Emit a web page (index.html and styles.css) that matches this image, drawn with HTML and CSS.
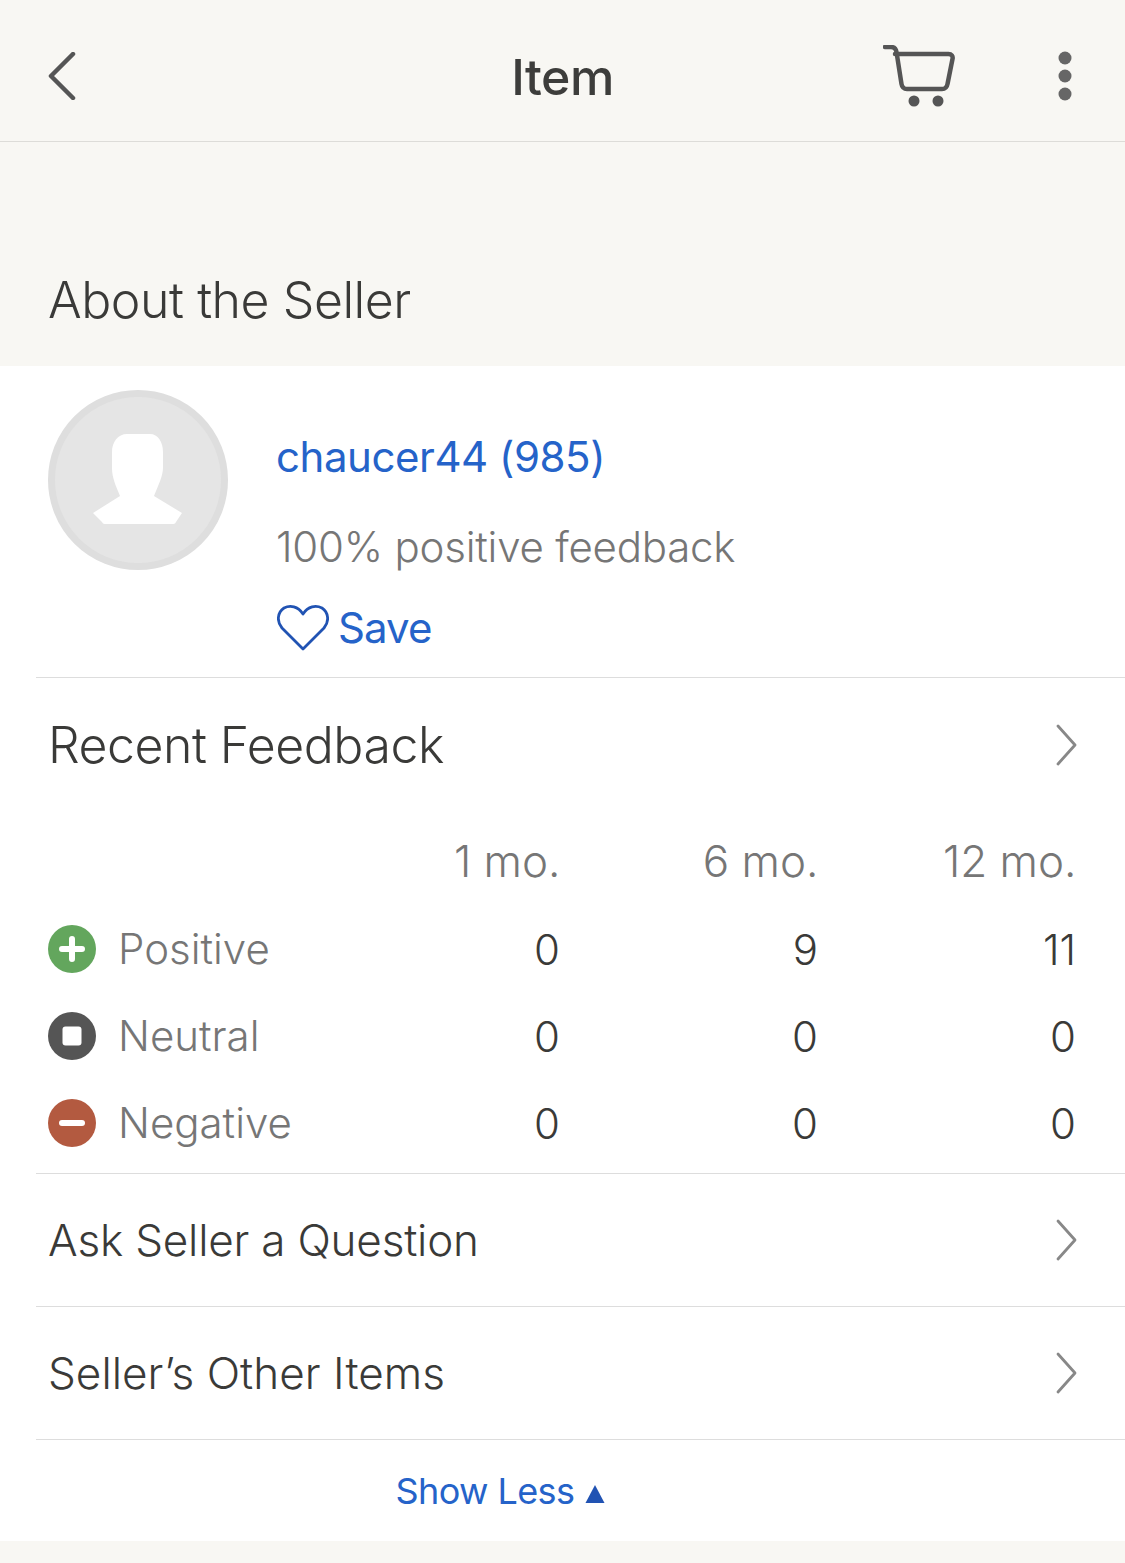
FILE: index.html
```html
<!DOCTYPE html>
<html lang="en">
<head>
<meta charset="utf-8">
<title>Item</title>
<link rel="stylesheet" href="styles.css">
</head>
<body>
<header class="topbar">
  <svg class="back" width="30" height="48" viewBox="0 0 30 48"><path d="M26 2 4 24l22 22" fill="none" stroke="#555" stroke-width="4.500" stroke-linecap="round" stroke-linejoin="round"/></svg>
  <h1 class="topbar-title">Item</h1>
  <svg class="cart" width="76" height="64" viewBox="0 0 76 64"><g fill="none" stroke="#555" stroke-width="4.500" stroke-linecap="round" stroke-linejoin="round"><path d="M2 2h6c3 0 5 2 5.500 5l5 32c.5 3 2.500 5 5.500 5h35c3 0 5-2 5.500-5l5-25c.7-3-1-5-4-5H12"/></g><circle cx="31" cy="56" r="5.500" fill="#555"/><circle cx="55" cy="56" r="5.500" fill="#555"/></svg>
  <svg class="dots" width="14" height="50" viewBox="0 0 14 50"><circle cx="7" cy="7" r="6.500" fill="#666"/><circle cx="7" cy="25" r="6.500" fill="#666"/><circle cx="7" cy="43" r="6.500" fill="#666"/></svg>
</header>
<h2 class="section-title">About the Seller</h2>
<main class="card">
  <section class="seller">
    <svg class="avatar" width="180" height="180" viewBox="0 0 180 180"><circle cx="90" cy="90" r="86.500" fill="#e5e5e5" stroke="#dedede" stroke-width="7"/><path d="M79 44h23c8 0 13 8 13 18v16c0 8-5 18-9 28l28 17-6 9c-1 2-2 2-4 2H58c-2 0-3 0-4-2l-9-9 27-17c-4-10-8-18-8-28V62c0-10 6-18 15-18z" fill="#fff"/></svg>
    <div class="seller-info">
      <a class="seller-name">chaucer44 (985)</a>
      <p class="seller-score">100% positive feedback</p>
      <div class="save">
        <svg width="52" height="48" viewBox="0 0 52 48"><path d="M26 45 5 24C-1 17 1 8 7 4c6-3 14-2 19 6 5-8 13-9 19-6 6 4 8 13 2 20z" fill="none" stroke="#2153b3" stroke-width="2.800" stroke-linejoin="round"/></svg>
        <span>Save</span>
      </div>
    </div>
  </section>
  <section class="feedback">
    <div class="row-head">
      <h3 class="feedback-title">Recent Feedback</h3>
      <svg class="chev" width="24" height="42" viewBox="0 0 24 42"><path d="M4 2l17 19L4 40" fill="none" stroke="#888" stroke-width="2.800" stroke-linecap="round" stroke-linejoin="round"/></svg>
    </div>
    <div class="grid">
      <span></span><span class="period">1 mo.</span><span class="period">6 mo.</span><span class="period">12 mo.</span>
      <span class="kind"><svg width="50" height="50" viewBox="0 0 50 50"><circle cx="25" cy="25" r="24" fill="#63a65d"/><path d="M25 15v20M15 25h20" stroke="#fff" stroke-width="6" stroke-linecap="round"/></svg>Positive</span><span class="num">0</span><span class="num">9</span><span class="num">11</span>
      <span class="kind"><svg width="50" height="50" viewBox="0 0 50 50"><circle cx="25" cy="25" r="24" fill="#555"/><rect x="15.500" y="15.500" width="19" height="19" rx="3" fill="#fff"/></svg>Neutral</span><span class="num">0</span><span class="num">0</span><span class="num">0</span>
      <span class="kind"><svg width="50" height="50" viewBox="0 0 50 50"><circle cx="25" cy="25" r="24" fill="#b35a40"/><path d="M15 25h20" stroke="#fff" stroke-width="6" stroke-linecap="round"/></svg>Negative</span><span class="num">0</span><span class="num">0</span><span class="num">0</span>
    </div>
  </section>
  <div class="link-row ask"><span>Ask Seller a Question</span><svg class="chev" width="24" height="42" viewBox="0 0 24 42"><path d="M4 2l17 19L4 40" fill="none" stroke="#888" stroke-width="2.800" stroke-linecap="round" stroke-linejoin="round"/></svg></div>
  <div class="link-row others"><span>Seller’s Other Items</span><svg class="chev" width="24" height="42" viewBox="0 0 24 42"><path d="M4 2l17 19L4 40" fill="none" stroke="#888" stroke-width="2.800" stroke-linecap="round" stroke-linejoin="round"/></svg></div>
  <div class="show-less"><span>Show Less</span><svg width="20" height="18" viewBox="0 0 20 18"><path d="M10 0l9.500 18H.5z" fill="#2153b3"/></svg></div>
</main>
</body>
</html>
```
FILE: styles.css
```css
* { box-sizing: border-box; }
html, body { margin: 0; padding: 0; }
body { width: 1125px; height: 1563px; overflow: hidden; background: #f8f7f3; font-family: Inter, "Liberation Sans", sans-serif; color: #3a3a38; }
h1, h2, h3, p { margin: 0; font-weight: 400; }
.topbar { height: 142px; border-bottom: 1px solid #dddcd8; display: flex; align-items: center; position: relative; padding: 0 52px 0 47px; }
.back { flex: none; margin-top: 11px; }
.topbar-title { font-size: 50px; font-weight: 500; letter-spacing: -0.5px; line-height: 60px; color: #3d3d3b; position: absolute; left: 0; right: 0; top: 47px; text-align: center; }
.cart { margin-left: auto; margin-top: 13px; margin-right: 114px; }
.dots { position: absolute; left: 1058px; top: 51px; }
.section-title { height: 224px; padding: 128px 0 0 48px; font-size: 50px; line-height: 60px; font-weight: 300; letter-spacing: -0.45px; color: #3a3a38; }
.card { background: #fff; height: 1175px; padding-left: 36px; }
.seller { height: 312px; border-bottom: 1px solid #dddddd; display: flex; padding: 24px 0 0 12px; }
.avatar { flex: none; }
.seller-info { margin-left: 48px; display: flex; flex-direction: column; }
.seller-name { font-size: 42px; line-height: 50px; color: #2563c9; margin-top: 42px; letter-spacing: -0.45px; }
.seller-score { font-size: 42px; line-height: 50px; color: #767676; margin-top: 40px; font-weight: 300; letter-spacing: -0.22px; }
.save { display: flex; align-items: center; gap: 9px; margin-top: 31px; font-size: 42px; line-height: 50px; color: #2563c9; letter-spacing: -0.9px; }
.save svg { margin-left: 1px; }
.feedback { height: 496px; border-bottom: 1px solid #dddddd; }
.row-head { height: 134px; display: flex; align-items: center; justify-content: space-between; padding: 0 47px 0 12px; }
.feedback-title { font-size: 50px; line-height: 60px; font-weight: 300; letter-spacing: -0.5px; }
.grid { display: grid; grid-template-columns: 345px 179px 258px 258px; grid-auto-rows: 87px; margin-top: 6px; }
.period { text-align: right; font-size: 44px; line-height: 87px; font-weight: 300; color: #767676; margin-right: -0.5px; }
.kind { display: flex; align-items: center; gap: 21px; padding-left: 11px; font-size: 42px; color: #767676; font-weight: 300; }
.kind svg { flex: none; }
.num { text-align: right; font-size: 42px; line-height: 87px; padding-top: 1px; color: #3a3a38; font-weight: 300; }
.link-row { height: 133px; border-bottom: 1px solid #dddddd; display: flex; align-items: center; justify-content: space-between; padding: 0 47px 0 12px; font-size: 44px; font-weight: 300; color: #3a3a38; }
.ask { letter-spacing: -0.2px; }
.others { letter-spacing: 0.05px; }
.show-less { height: 101px; display: flex; align-items: center; justify-content: center; gap: 11px; padding: 0 160px 0 0; font-size: 36px; color: #2563c9; letter-spacing: -0.6px; }
.show-less svg { margin-top: 6px; }
```
